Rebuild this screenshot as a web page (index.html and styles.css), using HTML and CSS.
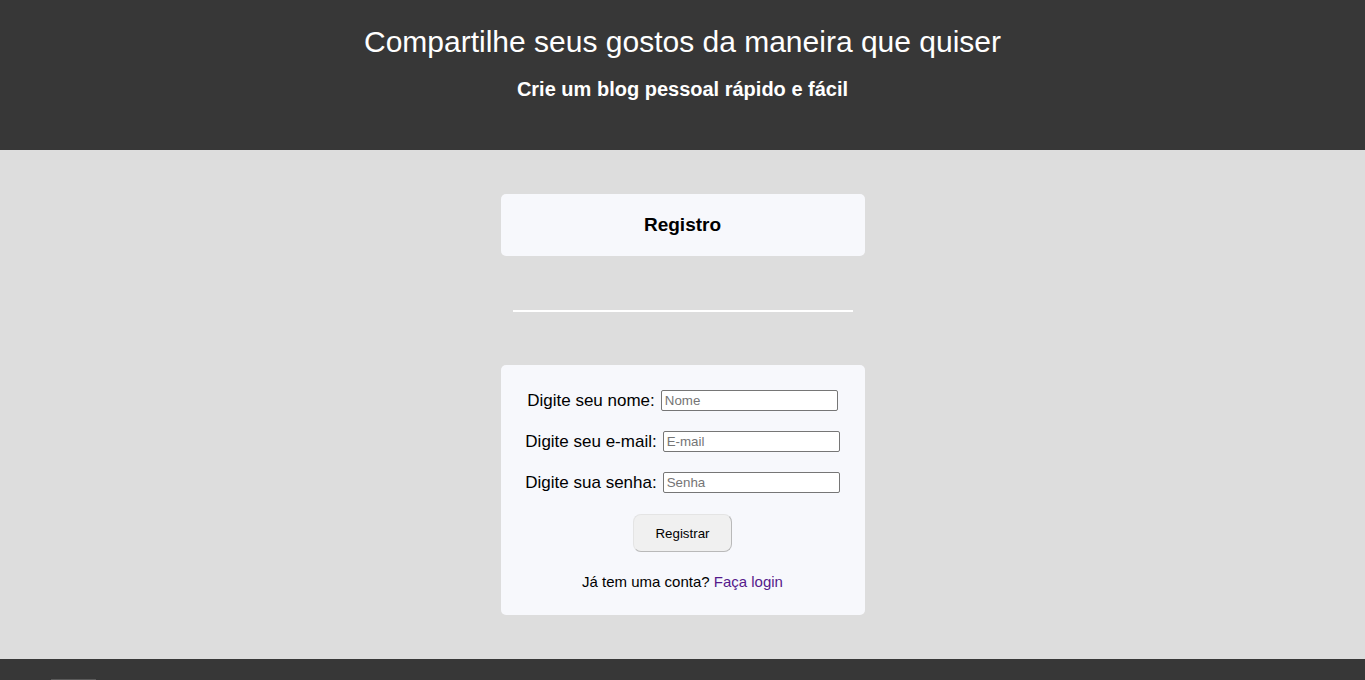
FILE: index.html
```html
<!DOCTYPE html>
<html lang="pt-BR">
<head>
<meta charset="utf-8">
<title>Registro</title>
<link rel="stylesheet" href="styles.css">
</head>
<body>
<header class="top">
  <h1 class="top-title">Compartilhe seus gostos da maneira que quiser</h1>
  <h2 class="top-sub">Crie um blog pessoal rápido e fácil</h2>
</header>
<main class="main">
  <div class="card card-head">
    <h3 class="card-title">Registro</h3>
  </div>
  <hr class="divider">
  <form class="card card-form">
    <div class="row"><label class="lbl">Digite seu nome:</label><input class="inp" type="text" placeholder="Nome"></div>
    <div class="row"><label class="lbl">Digite seu e-mail:</label><input class="inp" type="text" placeholder="E-mail"></div>
    <div class="row"><label class="lbl">Digite sua senha:</label><input class="inp" type="password" placeholder="Senha"></div>
    <button class="btn" type="button">Registrar</button>
    <p class="login">Já tem uma conta? <a class="login-link" href="#">Faça login</a></p>
  </form>
</main>
<footer class="foot"><span class="foot-mark"></span></footer>
</body>
</html>
```

FILE: styles.css
```css
* { box-sizing: border-box; }
html, body { margin: 0; padding: 0; }
body {
  font-family: "Liberation Sans", Arial, sans-serif;
  background: #dddddd;
  color: #000;
  height: 680px;
  overflow: hidden;
}
.top {
  background: #373737;
  height: 150px;
  display: flex;
  flex-direction: column;
  align-items: center;
  padding-top: 24px;
}
.top-title {
  margin: 0;
  font-size: 30px;
  font-weight: normal;
  color: #fff;
  line-height: 36px;
}
.top-sub {
  margin: 17px 0 0;
  font-size: 20px;
  font-weight: bold;
  color: #fff;
  line-height: 24px;
}
.main {
  display: flex;
  flex-direction: column;
  align-items: center;
  padding-top: 44px;
  height: 509px;
}
.card {
  width: 364px;
  background: #f7f8fc;
  border-radius: 5px;
}
.card-head {
  height: 62px;
  display: flex;
  align-items: center;
  justify-content: center;
}
.card-title {
  margin: 0;
  font-size: 19px;
  font-weight: bold;
}
.divider {
  width: 340px;
  border: 0;
  height: 2px;
  background: #fff;
  margin: 54px 0 53px;
}
.card-form {
  height: 250px;
  display: flex;
  flex-direction: column;
  align-items: center;
  padding-top: 25px;
}
.row {
  display: flex;
  align-items: center;
  height: 21px;
  margin-bottom: 20px;
}
.lbl {
  font-size: 17px;
  margin-right: 6px;
}
.inp {
  width: 177px;
  height: 21px;
  border: 1px solid #767676;
  border-radius: 2px;
  padding: 1px 3px;
  font-family: "Liberation Sans", Arial, sans-serif;
  font-size: 13.33px;
  background: #fff;
}
.inp::placeholder { color: #757575; }
.btn {
  margin-top: 1px;
  width: 99px;
  height: 38px;
  background: #f0f0f0;
  border: 1px solid #e4e4e4;
  border-right-color: #b9b9b9;
  border-bottom-color: #b9b9b9;
  border-radius: 8px;
  font-family: "Liberation Sans", Arial, sans-serif;
  font-size: 13.33px;
  color: #000;
}
.login {
  margin: 21px 0 0;
  font-size: 15px;
}
.login-link {
  color: #551a8b;
  text-decoration: none;
}
.foot {
  background: #373737;
  height: 21px;
  position: relative;
}
.foot-mark {
  position: absolute;
  left: 51px;
  bottom: 0;
  width: 45px;
  height: 1px;
  background: #5a5a5a;
}
```
